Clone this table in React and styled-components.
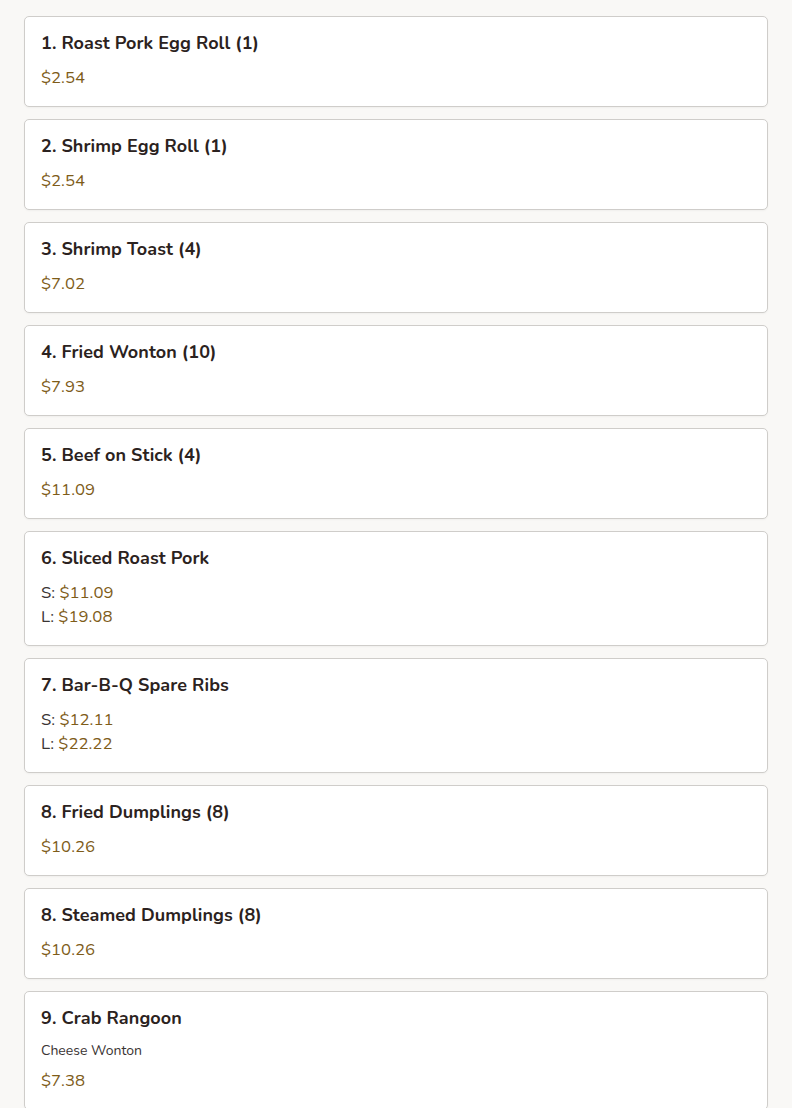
import React from "react";
import styled, { createGlobalStyle } from "styled-components";

const Global = createGlobalStyle`
  html, body { margin: 0; padding: 0; background: #f9f8f6; }
  body { font-family: "Nunito", "Lato", "Noto Sans", sans-serif; color: #2b2220; }
  * { box-sizing: border-box; }
`;

const List = styled.div`
  display: flex;
  flex-direction: column;
  gap: 12px;
  padding: 16px 24px;
`;

const Card = styled.div`
  background: #ffffff;
  border: 1px solid #cfcdca;
  border-radius: 5px;
  padding: 16px 16px 16px;
  box-shadow: 0 1px 2px rgba(0, 0, 0, 0.04);
`;

const Title = styled.h3`
  margin: 0 0 12px;
  font-size: 18px;
  line-height: 21px;
  font-weight: 700;
  letter-spacing: 0.08px;
  color: #2b2220;
`;

const Desc = styled.p`
  margin: 0 0 9px;
  font-size: 14px;
  line-height: 19px;
  color: #3a3433;
`;

const PriceLine = styled.div`
  font-size: 16.75px;
  line-height: 24px;
  color: #3a3433;
`;

const Amount = styled.span`
  color: #7e5c19;
`;

const items = [
  { name: "1. Roast Pork Egg Roll (1)", prices: [[null, "$2.54"]] },
  { name: "2. Shrimp Egg Roll (1)", prices: [[null, "$2.54"]] },
  { name: "3. Shrimp Toast (4)", prices: [[null, "$7.02"]] },
  { name: "4. Fried Wonton (10)", prices: [[null, "$7.93"]] },
  { name: "5. Beef on Stick (4)", prices: [[null, "$11.09"]] },
  { name: "6. Sliced Roast Pork", prices: [["S", "$11.09"], ["L", "$19.08"]] },
  { name: "7. Bar-B-Q Spare Ribs", prices: [["S", "$12.11"], ["L", "$22.22"]] },
  { name: "8. Fried Dumplings (8)", prices: [[null, "$10.26"]] },
  { name: "8. Steamed Dumplings (8)", prices: [[null, "$10.26"]] },
  { name: "9. Crab Rangoon", desc: "Cheese Wonton", prices: [[null, "$7.38"]] },
];

export default function App() {
  return (
    <>
      <Global />
      <List>
        {items.map((it, i) => (
          <Card key={i}>
            <Title>{it.name}</Title>
            {it.desc && <Desc>{it.desc}</Desc>}
            {it.prices.map(([label, amt], j) => (
              <PriceLine key={j}>
                {label && `${label}: `}
                <Amount>{amt}</Amount>
              </PriceLine>
            ))}
          </Card>
        ))}
      </List>
    </>
  );
}
